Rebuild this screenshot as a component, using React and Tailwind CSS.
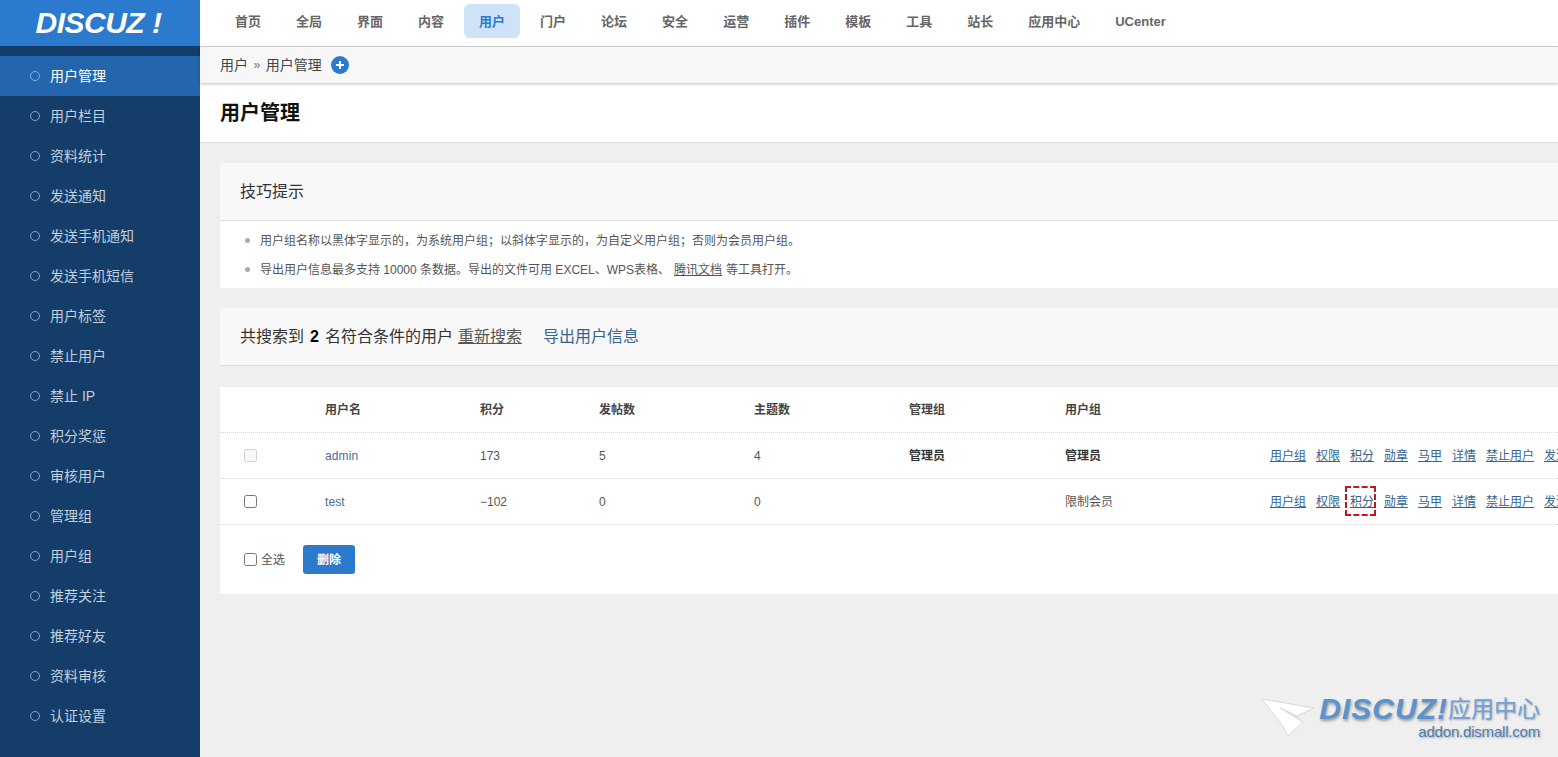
import React from 'react';

const font = { fontFamily: '"Liberation Sans", "Noto Sans CJK SC", sans-serif' };

const navItems = ['首页', '全局', '界面', '内容', '用户', '门户', '论坛', '安全', '运营', '插件', '模板', '工具', '站长', '应用中心', 'UCenter'];
const sideItems = ['用户管理', '用户栏目', '资料统计', '发送通知', '发送手机通知', '发送手机短信', '用户标签', '禁止用户', '禁止 IP', '积分奖惩', '审核用户', '管理组', '用户组', '推荐关注', '推荐好友', '资料审核', '认证设置'];
const actions = ['用户组', '权限', '积分', '勋章', '马甲', '详情', '禁止用户', '发送'];

const rowCols = 'grid grid-cols-[105px_155px_119px_155px_155px_156px_205px_1fr] items-center';

const Sidebar = () => (
  <aside className="w-[200px] shrink-0 bg-[#153d6a] flex flex-col">
    <div className="h-[46px] bg-[#2b7acd] flex items-center justify-center pr-[3px]">
      <span className="text-white italic font-bold text-[30px] tracking-[-0.5px] leading-none font-['Liberation_Sans',sans-serif]">DISCUZ !</span>
    </div>
    <ul className="pt-[10px]">
      {sideItems.map((item, idx) => (
        <li
          key={item}
          className={`h-10 flex items-center pl-[30px] text-sm ${idx === 0 ? 'bg-[#2366ae] text-white' : 'text-[#c3cfdc]'}`}
        >
          <span className="w-[10px] h-[10px] rounded-full border border-[#8fa9c6] mr-[10px]" />
          {item}
        </li>
      ))}
    </ul>
  </aside>
);

const TopNav = () => (
  <div className="h-[47px] shrink-0 bg-white border-b border-[#d4d4d4] flex items-start pt-1 pl-[20px] text-[13px] font-bold text-[#666]">
    {navItems.map((item) => (
      <a
        key={item}
        className={`h-[34px] flex items-center rounded-md px-[15px] mr-[5px] pt-px ${item === '用户' ? 'bg-[#cfe3f8] text-[#2b7acd]' : ''}`}
      >
        {item}
      </a>
    ))}
  </div>
);

const ActionLinks = () => (
  <div className="flex gap-[10px] text-xs whitespace-nowrap">
    {actions.map((a) => <a key={a} className="underline text-[#36648f]">{a}</a>)}
  </div>
);

const App = () => (
  <div style={font} className="flex h-[757px] w-[1558px] overflow-hidden relative bg-[#efefef] text-[#333]">
    <Sidebar />
    <main className="flex-1 min-w-0 flex flex-col">
      <TopNav />
      <div className="h-[36px] shrink-0 bg-[#f7f7f7] flex items-center pl-5 text-sm text-[#444] shadow-[0_1px_3px_rgba(0,0,0,0.25)] relative">
        用户
        <span className="mx-[5.5px] text-xs text-[#777]">»</span>
        用户管理
        <span className="ml-[9px] w-[18px] h-[18px] rounded-full bg-[#2b7acd] flex items-center justify-center text-white">
          <svg width="10" height="10" viewBox="0 0 10 10"><path d="M5 1v8M1 5h8" stroke="currentColor" strokeWidth="2" /></svg>
        </span>
      </div>
      <div className="h-[60px] shrink-0 bg-white border-b border-[#dedede] flex items-center pl-5 text-xl font-bold text-[#111]">
        用户管理
      </div>

      <div className="pt-5 pl-5 flex flex-col gap-5">
        <section className="bg-white">
          <div className="h-[58px] bg-[#f8f8f8] border-b border-[#dedede] flex items-center pl-5 text-base">技巧提示</div>
          <ul className="pt-[5px] pb-[4px] pl-[25px] text-xs text-[#555]">
            <li className="h-[29px] flex items-center">
              <span className="w-[5px] h-[5px] rounded-full bg-[#aaa] mr-[10px]" />
              用户组名称以黑体字显示的，为系统用户组；以斜体字显示的，为自定义用户组；否则为会员用户组。
            </li>
            <li className="h-[29px] flex items-center">
              <span className="w-[5px] h-[5px] rounded-full bg-[#aaa] mr-[10px]" />
              导出用户信息最多支持 10000 条数据。导出的文件可用 EXCEL、WPS表格、
              <a className="underline mx-1">腾讯文档</a>
              等工具打开。
            </li>
          </ul>
        </section>

        <section className="h-[58px] bg-[#f8f8f8] border-b border-[#dedede] flex items-center pl-5 text-base">
          共搜索到 <b className="mx-[6px] text-black">2</b> 名符合条件的用户
          <a className="underline ml-[5px] text-[#555]">重新搜索</a>
          <a className="ml-[21px] text-[#36648f]">导出用户信息</a>
        </section>

        <section className="bg-white h-[207px] mt-px text-xs text-[#555]">
          <div className={`${rowCols} h-[46px] border-b border-dotted border-[#cfdcdc] font-bold text-[#444]`}>
            <span />
            <span>用户名</span>
            <span>积分</span>
            <span>发帖数</span>
            <span>主题数</span>
            <span>管理组</span>
            <span>用户组</span>
          </div>
          <div className={`${rowCols} h-[46px] border-b border-dotted border-[#cfdcdc]`}>
            <span className="pl-6 flex"><input type="checkbox" disabled className="w-[13px] h-[13px]" /></span>
            <a className="text-[#4a6a94] tracking-[0.1px]">admin</a>
            <span>173</span>
            <span>5</span>
            <span>4</span>
            <b className="text-[#333]">管理员</b>
            <b className="text-[#333]">管理员</b>
            <ActionLinks />
          </div>
          <div className={`${rowCols} h-[46px] border-b border-dotted border-[#cfdcdc]`}>
            <span className="pl-6 flex"><input type="checkbox" className="w-[13px] h-[13px]" /></span>
            <a className="text-[#4a6a94] tracking-[0.1px]">test</a>
            <span>−102</span>
            <span>0</span>
            <span>0</span>
            <span />
            <span>限制会员</span>
            <div className="relative">
              <ActionLinks />
              <span className="absolute left-[75px] top-[-8px] w-[31px] h-[30px] border-2 border-dashed border-[#c4171d]" />
            </div>
          </div>
          <div className="flex items-center pl-6 pt-5">
            <input type="checkbox" className="w-[13px] h-[13px]" />
            <span className="ml-1">全选</span>
            <button className="ml-[18px] w-[52px] h-[29px] rounded-[3px] bg-[#2b7acd] text-white font-bold">删除</button>
          </div>
        </section>
      </div>
    </main>

    {/* 水印 */}
    <div className="absolute right-[18px] bottom-[17px] flex items-end pointer-events-none">
      <svg width="54" height="40" viewBox="0 0 54 40" className="mr-[4px] mb-[2px]">
        <path d="M1 1 L53 10 L36 18 L19 10 L42 24 L27 38 L21 27 Z" fill="#fff" stroke="#d8d8d8" />
        <path d="M19 10 L36 18 L42 24 Z" fill="#dcdcdc" />
      </svg>
      <div className="flex flex-col items-end">
        <div className="flex items-center leading-none">
          <span className="italic font-bold text-[30px] tracking-[1px] text-[#5b93cf] font-['Liberation_Sans',sans-serif] [text-shadow:1px_2px_3px_rgba(0,0,0,0.35)]">DISCUZ!</span>
          <span className="text-[23px] text-[#6fa3d8] [text-shadow:1px_1px_2px_rgba(0,0,0,0.3)]">应用中心</span>
        </div>
        <span className="text-[15px] leading-[16px] tracking-[-0.2px] text-[#4d7fb5] [text-shadow:1px_1px_2px_rgba(0,0,0,0.3)]">addon.dismall.com</span>
      </div>
    </div>
  </div>
);

export default App;
